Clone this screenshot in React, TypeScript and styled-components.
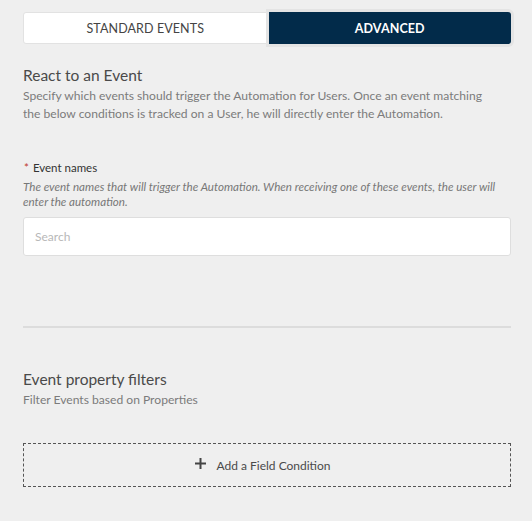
import React from "react";
import styled, { createGlobalStyle } from "styled-components";

const Global = createGlobalStyle`
  html, body { margin: 0; padding: 0; background: #efefef; }
  body { font-family: "Lato", "Liberation Sans", sans-serif; color: #4a4a4a; }
  * { box-sizing: border-box; }
`;

const Page = styled.div`
  width: 532px;
  height: 521px;
  padding: 12px 21px 0 23px;
  display: flex;
  flex-direction: column;
`;

const Tabs = styled.div`
  display: flex;
  height: 32px;
`;

const Tab = styled.div<{ $active?: boolean }>`
  flex: 1;
  display: flex;
  align-items: center;
  justify-content: center;
  font-size: 12.5px;
  letter-spacing: 0.1px;
  color: ${(p) => (p.$active ? "#ffffff" : "#444")};
  font-weight: ${(p) => (p.$active ? 700 : 400)};
  background: ${(p) => (p.$active ? "#022b4a" : "#ffffff")};
  border: ${(p) => (p.$active ? "none" : "1px solid #e2e2e2")};
  border-radius: ${(p) => (p.$active ? "0 3px 3px 0" : "3px 0 0 3px")};
  box-shadow: ${(p) => (p.$active ? "0 0 0 3px #e4e4e4" : "none")};
  margin-left: ${(p) => (p.$active ? "1px" : "0")};
`;

const Section = styled.div<{ $mt: number }>`
  margin-top: ${(p) => p.$mt}px;
  display: flex;
  flex-direction: column;
`;

const Title = styled.div`
  font-size: 15.5px;
  color: #4a4a4a;
  line-height: 20px;
`;

const Desc = styled.div`
  margin-top: 2px;
  max-width: 470px;
  font-size: 12.1px;
  color: #7b7b7b;
  line-height: 18px;
`;

const Label = styled.div`
  font-size: 11.5px;
  font-weight: 400;
  color: #333;
  line-height: 14px;
  margin-left: 1px;
`;

const Star = styled.span`
  color: #c0392b;
  margin-right: 4px;
`;

const Hint = styled.div`
  font-size: 11.6px;
  font-style: italic;
  color: #777;
  line-height: 15px;
  margin-top: 4px;
`;

const Input = styled.input`
  margin-top: 8px;
  height: 39px;
  width: 100%;
  background: #fff;
  border: 1px solid #dedede;
  border-radius: 3px;
  padding: 0 11px;
  font-family: inherit;
  font-size: 12px;
  outline: none;
  &::placeholder { color: #b8b8b8; }
`;

const Divider = styled.hr`
  margin: 70px 0 0;
  border: none;
  border-top: 2px solid #dcdcdc;
  width: 100%;
`;

const AddButton = styled.button`
  margin-top: 34px;
  height: 44px;
  width: 100%;
  border: 1.5px dashed #555;
  background: transparent;
  display: flex;
  align-items: center;
  justify-content: center;
  gap: 10px;
  padding-right: 14px;
  font-family: inherit;
  font-size: 12px;
  color: #4a4a4a;
`;

const Plus = styled.svg`
  width: 11px;
  height: 11px;
  margin-top: -3px;
`;

export default function App() {
  return (
    <>
      <Global />
      <Page>
        <Tabs>
          <Tab>STANDARD EVENTS</Tab>
          <Tab $active>ADVANCED</Tab>
        </Tabs>
        <Section $mt={21}>
          <Title>React to an Event</Title>
          <Desc>
            Specify which events should trigger the Automation for Users. Once an event matching
            the below conditions is tracked on a User, he will directly enter the Automation.
          </Desc>
        </Section>
        <Section $mt={38}>
          <Label>
            <Star>*</Star>Event names
          </Label>
          <Hint>
            The event names that will trigger the Automation. When receiving one of these events, the user will
            enter the automation.
          </Hint>
          <Input placeholder="Search" />
        </Section>
        <Divider />
        <Section $mt={41}>
          <Title>Event property filters</Title>
          <Desc>Filter Events based on Properties</Desc>
        </Section>
        <AddButton>
          <Plus viewBox="0 0 11 11">
            <path d="M5.5 0v11M0 5.5h11" stroke="#444" strokeWidth="2" />
          </Plus>
          Add a Field Condition
        </AddButton>
      </Page>
    </>
  );
}
